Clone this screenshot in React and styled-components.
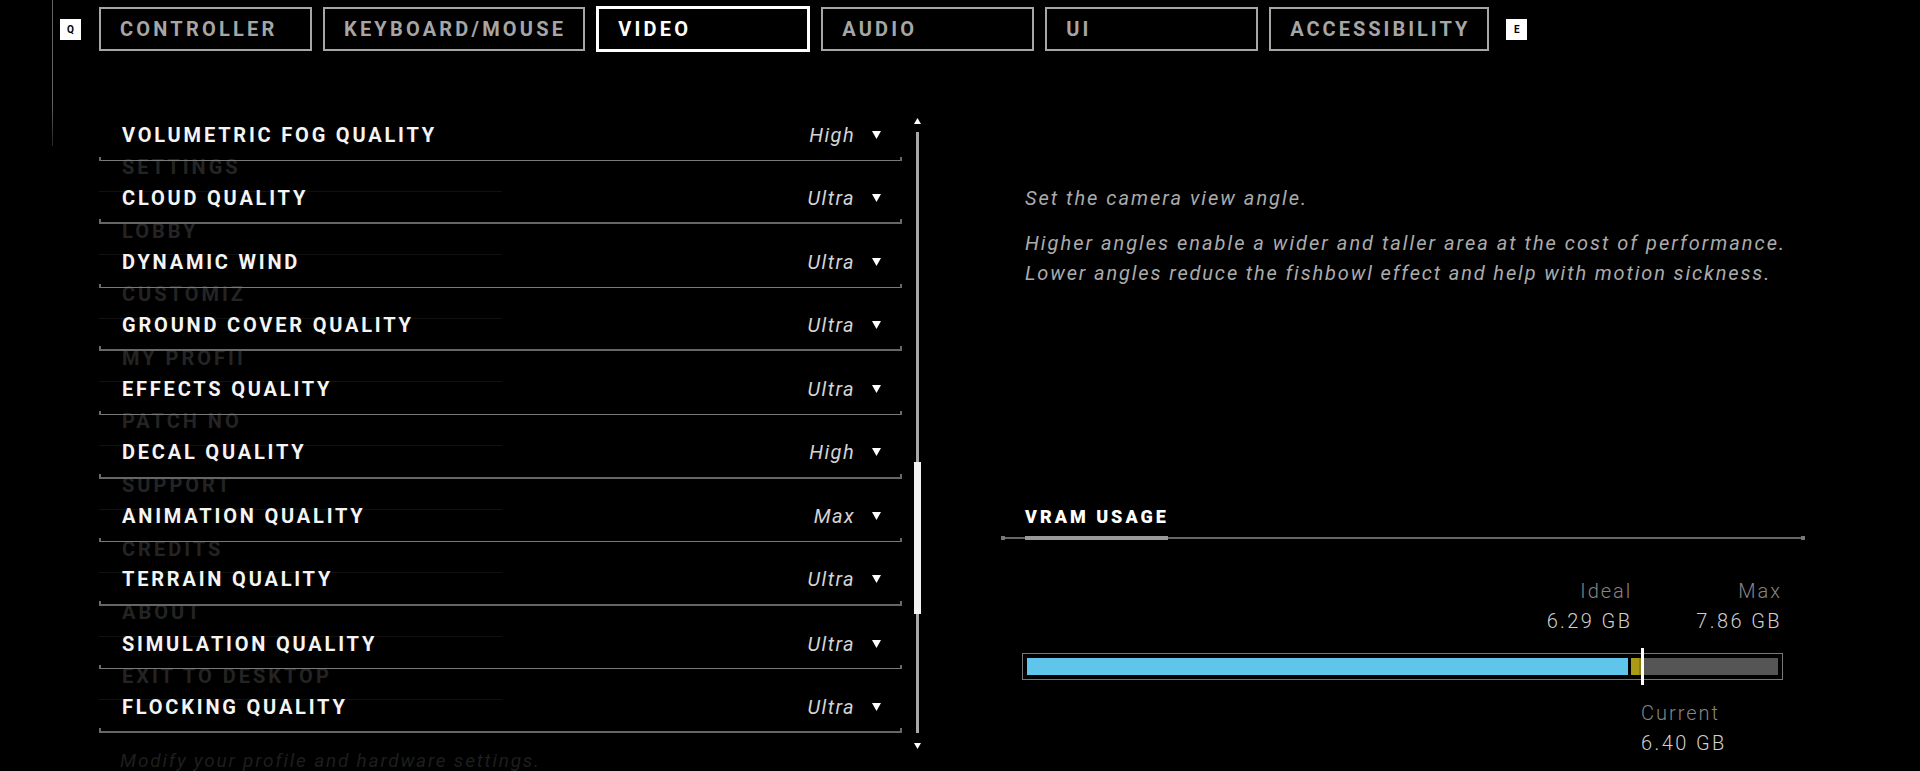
import styled, { createGlobalStyle } from "styled-components";

const GlobalStyle = createGlobalStyle`
  html, body {
    margin: 0;
    padding: 0;
    background: #000;
  }
  body {
    font-family: "Roboto", "Liberation Sans", sans-serif;
  }
`;

const Page = styled.div`
  position: relative;
  width: 1920px;
  height: 771px;
  overflow: hidden;
  background: #000;
  color: #fff;
`;

const EdgeLine = styled.div`
  position: absolute;
  left: 52px;
  top: 0;
  width: 1px;
  height: 146px;
  background: linear-gradient(#666 70%, #222);
`;

const TabBar = styled.nav`
  display: flex;
  align-items: center;
  height: 58px;
  padding-left: 60px;
`;

const KeyBadge = styled.span`
  width: 21px;
  height: 21px;
  flex: none;
  display: flex;
  align-items: center;
  justify-content: center;
  background: #fff;
  color: #000;
  font-size: 10px;
  font-weight: 700;
  margin: ${(p) => (p.$end ? "0 0 0 17px" : "0 18px 0 0")};
`;

const Tabs = styled.div`
  display: flex;
  align-items: center;
  gap: 11px;
`;

const Tab = styled.div`
  box-sizing: border-box;
  min-width: ${(p) => (p.$active ? "214px" : "213px")};
  height: ${(p) => (p.$active ? "46px" : "44px")};
  padding: 0 17px 0 19px;
  display: flex;
  align-items: center;
  border: ${(p) => (p.$active ? "3px solid #fff" : "2px solid #a6a6a6")};
  color: ${(p) => (p.$active ? "#fff" : "#a6a6a6")};
  font-size: 20px;
  font-weight: 700;
  letter-spacing: ${(p) => p.$spacing}px;
`;

const Main = styled.div`
  display: flex;
  padding: 39px 0 0 99px;
`;

const ListColumn = styled.section`
  position: relative;
  width: 803px;
`;

const Ghosts = styled.div`
  position: absolute;
  left: 0;
  top: 31px;
  width: 403px;
`;

const GhostItem = styled.div`
  box-sizing: border-box;
  height: 63.6px;
  padding: 27px 0 0 23px;
  border-bottom: 1px solid #111;
  color: #242424;
  font-size: 20px;
  font-weight: 700;
  letter-spacing: 3px;
  line-height: 24px;
  white-space: nowrap;
`;

const GhostFooter = styled.p`
  margin: 52px 0 0 21px;
  color: #1e1e1e;
  font-size: 19px;
  font-style: italic;
  letter-spacing: 1.8px;
  line-height: 18px;
  white-space: nowrap;
`;

const Rows = styled.div`
  position: relative;
`;

const Row = styled.div`
  position: relative;
  box-sizing: border-box;
  height: 63.6px;
  display: flex;
  align-items: center;
  padding: 13px 21px 0 23px;
  border-bottom: 1px solid #7a7a7a;

  &:nth-child(even) {
    border-bottom: 2px solid #666;
  }

  &::before,
  &::after {
    content: "";
    position: absolute;
    bottom: -1px;
    width: 2px;
    height: 4px;
    background: #6a6a6a;
  }
  &::before {
    left: 0;
  }
  &::after {
    right: 0;
  }
`;

const RowLabel = styled.span`
  flex: 1;
  font-size: 20px;
  font-weight: 700;
  letter-spacing: 2.8px;
  color: #f4f4f4;
`;

const RowValue = styled.span`
  font-size: 20px;
  font-style: italic;
  letter-spacing: 1.4px;
  color: #d4d4d4;
`;

const Caret = styled.svg`
  width: 9px;
  height: 8px;
  margin-left: 17px;
  fill: #fff;
  flex: none;
`;

const ScrollTrack = styled.div`
  position: relative;
  width: 3px;
  height: 601px;
  margin: 35px 0 0 14px;
  background: #a8a8a8;
`;

const ScrollThumb = styled.div`
  position: absolute;
  left: -2px;
  top: 330px;
  width: 7px;
  height: 152px;
  background: #f2f2f2;
`;

const ScrollArrow = styled.svg`
  position: absolute;
  left: -2px;
  width: 7px;
  height: 6px;
  fill: #fff;
  top: ${(p) => (p.$down ? "611px" : "-14px")};
`;

const InfoColumn = styled.section`
  width: 804px;
  margin-left: 82px;
  box-sizing: border-box;
`;

const Description = styled.div`
  height: 408px;
  padding: 86px 0 0 24px;
  box-sizing: border-box;
  color: #ababab;
  font-size: 20px;
  font-style: italic;
  line-height: 30px;
`;

const DescLine = styled.p`
  margin: ${(p) => (p.$gap ? "15px 0 0" : "0")};
  letter-spacing: ${(p) => p.$spacing || 2}px;
  white-space: nowrap;
`;

const SectionTitle = styled.h2`
  margin: 0 0 0 24px;
  font-size: 18px;
  font-weight: 900;
  letter-spacing: 3px;
  line-height: 24px;
  color: #fff;
`;

const SectionRule = styled.div`
  position: relative;
  height: 2px;
  margin-top: 8px;
  background: #666;

  &::before,
  &::after {
    content: "";
    position: absolute;
    top: -1px;
    width: 4px;
    height: 4px;
    background: #777;
  }
  &::before {
    left: 0;
  }
  &::after {
    right: 0;
  }
`;

const RuleMark = styled.div`
  position: absolute;
  left: 24px;
  top: -1px;
  width: 143px;
  height: 4px;
  background: #999;
`;

const Readouts = styled.div`
  display: flex;
  justify-content: flex-end;
  gap: 64px;
  margin: 37px 23px 0 0;
`;

const Readout = styled.div`
  text-align: right;
`;

const ReadoutName = styled.div`
  color: #858585;
  font-size: 20px;
  font-weight: 300;
  letter-spacing: 2px;
  line-height: 30px;
`;

const ReadoutValue = styled.div`
  color: #cfcfcf;
  font-size: 20px;
  font-weight: 300;
  letter-spacing: 2.4px;
  line-height: 30px;
`;

const Meter = styled.div`
  position: relative;
  box-sizing: border-box;
  display: flex;
  width: 761px;
  height: 27px;
  margin: 17px 0 0 21px;
  padding: 4px;
  border: 1px solid #777;
  background: #000;
`;

const MeterFill = styled.div`
  height: 100%;
  flex: ${(p) => (p.$grow ? "1" : `0 0 ${p.$w}px`)};
  margin-right: ${(p) => p.$gap || 0}px;
  background: ${(p) => p.$color};
`;

const MeterMark = styled.div`
  position: absolute;
  left: 618px;
  top: -6px;
  width: 3px;
  height: 37px;
  background: #fff;
`;

const CurrentBlock = styled.div`
  margin: 18px 0 0 640px;
`;

const rows = [
  ["VOLUMETRIC FOG QUALITY", "High"],
  ["CLOUD QUALITY", "Ultra"],
  ["DYNAMIC WIND", "Ultra"],
  ["GROUND COVER QUALITY", "Ultra"],
  ["EFFECTS QUALITY", "Ultra"],
  ["DECAL QUALITY", "High"],
  ["ANIMATION QUALITY", "Max"],
  ["TERRAIN QUALITY", "Ultra"],
  ["SIMULATION QUALITY", "Ultra"],
  ["FLOCKING QUALITY", "Ultra"],
];

const ghosts = [
  "SETTINGS",
  "LOBBY",
  "CUSTOMIZ",
  "MY PROFII",
  "PATCH NO",
  "SUPPORT",
  "CREDITS",
  "ABOUT",
  "EXIT TO DESKTOP",
];

const tabs = [
  ["CONTROLLER", 3.2],
  ["KEYBOARD/MOUSE", 3.2],
  ["VIDEO", 3.2],
  ["AUDIO", 3.2],
  ["UI", 3.2],
  ["ACCESSIBILITY", 3],
];

const App = () => {
  return (
    <Page>
      <GlobalStyle />
      <EdgeLine />
      <TabBar>
        <KeyBadge>Q</KeyBadge>
        <Tabs>
          {tabs.map(([name, spacing]) => (
            <Tab key={name} $active={name === "VIDEO"} $spacing={spacing}>
              {name}
            </Tab>
          ))}
        </Tabs>
        <KeyBadge $end>E</KeyBadge>
      </TabBar>
      <Main>
        <ListColumn>
          <Ghosts>
            {ghosts.map((g) => (
              <GhostItem key={g}>{g}</GhostItem>
            ))}
            <GhostFooter>Modify your profile and hardware settings.</GhostFooter>
          </Ghosts>
          <Rows>
            {rows.map(([label, value]) => (
              <Row key={label}>
                <RowLabel>{label}</RowLabel>
                <RowValue>{value}</RowValue>
                <Caret viewBox="0 0 9 8">
                  <path d="M0 0h9L4.5 8z" />
                </Caret>
              </Row>
            ))}
          </Rows>
        </ListColumn>
        <ScrollTrack>
          <ScrollArrow viewBox="0 0 7 6">
            <path d="M3.5 0L7 6H0z" />
          </ScrollArrow>
          <ScrollThumb />
          <ScrollArrow $down viewBox="0 0 7 6">
            <path d="M0 0h7L3.5 6z" />
          </ScrollArrow>
        </ScrollTrack>
        <InfoColumn>
          <Description>
            <DescLine>Set the camera view angle.</DescLine>
            <DescLine $gap>Higher angles enable a wider and taller area at the cost of performance.</DescLine>
            <DescLine $spacing={1.86}>Lower angles reduce the fishbowl effect and help with motion sickness.</DescLine>
          </Description>
          <SectionTitle>VRAM USAGE</SectionTitle>
          <SectionRule>
            <RuleMark />
          </SectionRule>
          <Readouts>
            <Readout>
              <ReadoutName>Ideal</ReadoutName>
              <ReadoutValue>6.29 GB</ReadoutValue>
            </Readout>
            <Readout>
              <ReadoutName>Max</ReadoutName>
              <ReadoutValue>7.86 GB</ReadoutValue>
            </Readout>
          </Readouts>
          <Meter>
            <MeterFill $color="#5fc5ea" $w={601} $gap={3} />
            <MeterFill $color="#a89a14" $w={8} />
            <MeterFill $color="#8a7e12" $w={3} />
            <MeterFill $color="#555" $grow />
            <MeterMark />
          </Meter>
          <CurrentBlock>
            <ReadoutName>Current</ReadoutName>
            <ReadoutValue>6.40 GB</ReadoutValue>
          </CurrentBlock>
        </InfoColumn>
      </Main>
    </Page>
  );
};

export default App;
